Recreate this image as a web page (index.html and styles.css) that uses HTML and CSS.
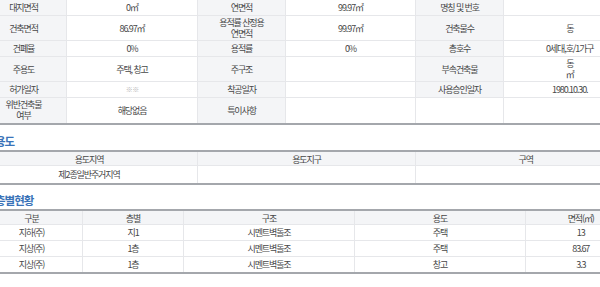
FILE: index.html
```html
<!DOCTYPE html>
<html lang="ko">
<head>
<meta charset="utf-8">
<title>건축물대장</title>
<link rel="stylesheet" href="styles.css">
</head>
<body>
<div class="page">
  <table class="grid info">
    <colgroup><col class="c86"><col class="c131"><col class="c88"><col class="c130"><col class="c88"><col class="c132"></colgroup>
    <tbody>
      <tr><th>대지면적</th><td>0㎡</td><th>연면적</th><td>99.97㎡</td><th>명칭 및 번호</th><td></td></tr>
      <tr><th>건축면적</th><td>86.97㎡</td><th>용적률 산정용<br>연면적</th><td>99.97㎡</td><th>건축물수</th><td>동</td></tr>
      <tr><th>건폐율</th><td>0%</td><th>용적률</th><td>0%</td><th>총호수</th><td>0세대,호/1가구</td></tr>
      <tr><th>주용도</th><td>주택, 창고</td><th>주구조</th><td></td><th>부속건축물</th><td>동<br>㎡</td></tr>
      <tr><th>허가일자</th><td class="faint">※ ※</td><th>착공일자</th><td></td><th>사용승인일자</th><td>1980.10.30.</td></tr>
      <tr><th>위반건축물<br>여부</th><td>해당없음</td><th>특이사항</th><td></td><th class="blank"></th><td></td></tr>
    </tbody>
  </table>

  <h2 class="heading">용도</h2>
  <table class="grid list zone">
    <colgroup><col class="c217"><col class="c218"><col class="c220"></colgroup>
    <thead><tr><th>용도지역</th><th>용도지구</th><th>구역</th></tr></thead>
    <tbody><tr><td>제2종일반주거지역</td><td></td><td></td></tr></tbody>
  </table>

  <h2 class="heading">층별현황</h2>
  <table class="grid list floors">
    <colgroup><col class="c102"><col class="c101"><col class="c171"><col class="c171"><col class="c110"></colgroup>
    <thead><tr><th>구분</th><th>층별</th><th>구조</th><th>용도</th><th>면적(㎡)</th></tr></thead>
    <tbody>
      <tr><td>지하(주)</td><td>지1</td><td>시멘트벽돌조</td><td>주택</td><td>13</td></tr>
      <tr><td>지상(주)</td><td>1층</td><td>시멘트벽돌조</td><td>주택</td><td>83.67</td></tr>
      <tr><td>지상(주)</td><td>1층</td><td>시멘트벽돌조</td><td>창고</td><td>3.3</td></tr>
    </tbody>
  </table>
</div>
</body>
</html>
```

FILE: styles.css
```css
html, body {
  margin: 0;
  padding: 0;
  background: #ffffff;
  overflow: hidden;
}

.page {
  width: 655px;
  margin-left: -20px;
  font-family: "Noto Sans CJK KR", "Noto Sans", sans-serif;
  font-size: 9px;
  letter-spacing: -1.1px;
  color: #474747;
}

.grid {
  width: 655px;
  border-collapse: collapse;
  table-layout: fixed;
  border-bottom: 2px solid #a4a7ac;
}

.grid th,
.grid td {
  font-weight: normal;
  text-align: center;
  vertical-align: middle;
  line-height: 11px;
  padding: 1px 2px;
  border-bottom: 1px solid #e6e7ea;
  border-left: 1px solid #e6e7ea;
  white-space: nowrap;
}

.info th,
.info td {
  height: 13px;
}

.info th {
  background: #f4f5f7;
}

.info th.blank {
  background: #ffffff;
}

.info tr:last-child th,
.info tr:last-child td {
  border-bottom: none;
  padding: 1px 2px 2px;
}

.faint {
  color: #b5b5b5;
  font-size: 7px;
}

.list {
  border-top: 2px solid #a4a7ac;
}

.list thead th {
  background: #f4f5f7;
  height: 12px;
  padding: 1px 2px 0;
}

.zone tbody td {
  height: 15px;
}

.floors tbody td {
  height: 13px;
}

.list tbody tr:last-child td {
  border-bottom: none;
}

.heading {
  margin: 0 0 1px;
  padding: 8px 0 0 15px;
  font-size: 11.5px;
  line-height: 16px;
  font-weight: bold;
  letter-spacing: -1px;
  color: #3a73b8;
}

.zone + .heading {
  padding-top: 7px;
}

.c86 { width: 86px; }
.c131 { width: 131px; }
.c88 { width: 88px; }
.c130 { width: 130px; }
.c132 { width: 132px; }
.c217 { width: 217px; }
.c218 { width: 218px; }
.c220 { width: 220px; }
.c102 { width: 102px; }
.c101 { width: 101px; }
.c171 { width: 171px; }
.c110 { width: 110px; }
```
